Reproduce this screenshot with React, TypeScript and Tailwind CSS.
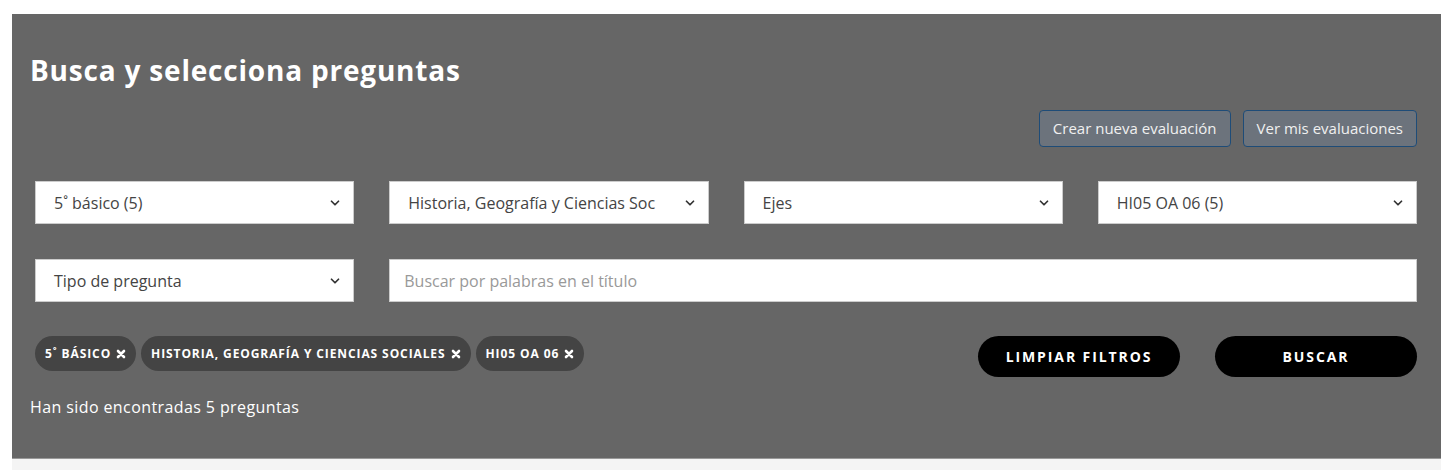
import React from "react";

const Chevron = () => (
  <svg width="14" height="14" viewBox="0 0 24 24" fill="none" stroke="#333" strokeWidth="3" strokeLinecap="round" strokeLinejoin="round">
    <path d="M6 9l6 6 6-6" />
  </svg>
);

const XIcon = () => (
  <svg width="10" height="10" viewBox="0 0 10 10" className="ml-[5px]">
    <path d="M2 2L8 8M8 2L2 8" stroke="#fff" strokeWidth="2.6" strokeLinecap="round" />
  </svg>
);

const Select = ({ label }: { label: string }) => (
  <div className="relative flex h-[43px] items-center border border-[#ccc] bg-white pl-[18px] pr-[40px] text-[16px] text-[#444]">
    <span className="whitespace-nowrap">{label}</span>
    <span className="absolute right-[11px] top-[14px]">
      <Chevron />
    </span>
  </div>
);

const Chip = ({ label }: { label: string }) => (
  <div className="flex h-[35px] items-center rounded-full bg-[#444] px-[10px] text-[12px] font-bold uppercase tracking-[0.9px] text-white">
    <span>{label}</span>
    <XIcon />
  </div>
);

export default function App() {
  const font = { fontFamily: "'Open Sans', 'Noto Sans', sans-serif" };
  return (
    <div className="min-h-[470px] bg-white pt-[14px]" style={font}>
      <div className="mx-[12px] bg-[#666] pb-[39px] pl-[18px] pr-[19px] pt-[39px]">
        <h1 className="h-[34px] text-[28px] font-bold leading-[34px] tracking-[0.8px] text-white">Busca y selecciona preguntas</h1>
        <div className="mt-[23px] flex justify-end gap-[12px] px-[5px]">
          <button className="h-[37px] rounded-[4px] border border-[#1e4c78] bg-[#6c737c] px-[13px] text-[15px] text-[#f0f0f0]">Crear nueva evaluación</button>
          <button className="h-[37px] rounded-[4px] border border-[#1e4c78] bg-[#6c737c] px-[13px] text-[15px] text-[#f0f0f0]">Ver mis evaluaciones</button>
        </div>
        <div className="mt-[34px] grid grid-cols-4 gap-x-[35px] px-[5px]">
          <Select label="5˚ básico (5)" />
          <Select label="Historia, Geografía y Ciencias Soc" />
          <Select label="Ejes" />
          <Select label="HI05 OA 06 (5)" />
        </div>
        <div className="mt-[35px] grid grid-cols-4 gap-x-[35px] px-[5px]">
          <Select label="Tipo de pregunta" />
          <div className="col-span-3 flex h-[43px] items-center border border-[#ccc] bg-white px-[14px] text-[16px] text-[#999]">
            Buscar por palabras en el título
          </div>
        </div>
        <div className="mt-[34px] flex items-start justify-between px-[5px]">
          <div className="flex gap-[5px]">
            <Chip label="5˚ Básico" />
            <Chip label="Historia, Geografía y Ciencias Sociales" />
            <Chip label="HI05 OA 06" />
          </div>
          <div className="flex gap-[35px]">
            <button className="h-[41px] w-[202px] rounded-full bg-black text-[14px] font-bold tracking-[1.9px] text-white">LIMPIAR FILTROS</button>
            <button className="h-[41px] w-[202px] rounded-full bg-black text-[14px] font-bold tracking-[1.9px] text-white">BUSCAR</button>
          </div>
        </div>
        <p className="mt-[18px] text-[16px] leading-[24px] tracking-[0.4px] text-white">Han sido encontradas 5 preguntas</p>
      </div>
      <div className="mx-[12px] h-[13px] border-t border-[#999] bg-[#f4f4f4]" />
    </div>
  );
}
